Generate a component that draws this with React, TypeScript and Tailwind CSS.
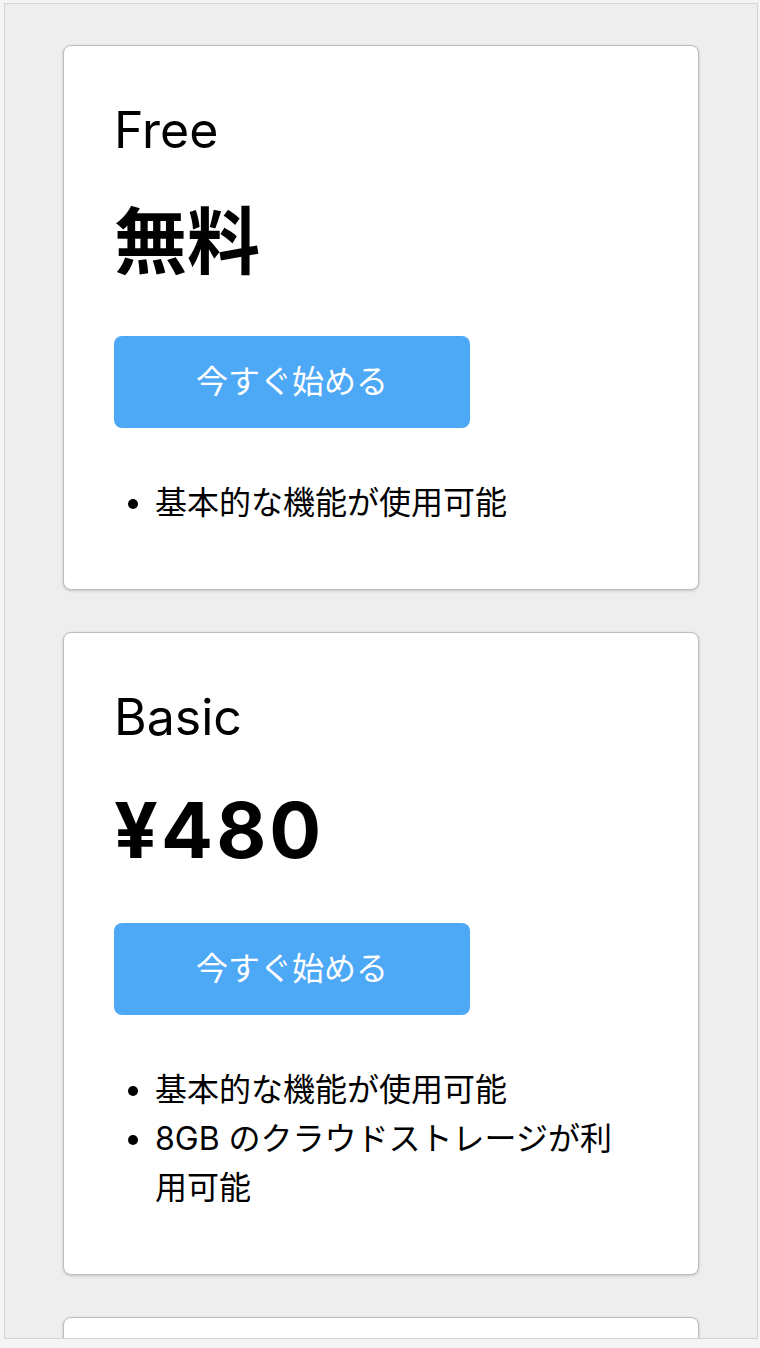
import React from "react";

const font = { fontFamily: '"Inter", "Noto Sans CJK JP", sans-serif' };

type Plan = { name: string; price: string; priceClass: string; features: string[] };

const plans: Plan[] = [
  { name: "Free", price: "無料", priceClass: "text-[73px]", features: ["基本的な機能が使用可能"] },
  {
    name: "Basic",
    price: "¥480",
    priceClass: "text-[77px] tracking-[0.04em]",
    features: ["基本的な機能が使用可能", "8GB のクラウドストレージが利用可能"],
  },
];

function Card({ plan }: { plan: Plan }) {
  return (
    <div className="bg-white border border-[#bdbdbd] rounded-[8px] shadow-[0_1px_3px_rgba(0,0,0,0.18)] pl-[50px] pr-[60px] pt-[60px] pb-[62px] text-black">
      <h2 className="text-[50px] leading-none font-normal -mt-[1px]">{plan.name}</h2>
      <div className={`mt-[50px] h-[74px] leading-none font-bold ${plan.priceClass}`}>{plan.price}</div>
      <button className="mt-[57px] w-[356px] h-[92px] rounded-[8px] bg-[#4da8f6] text-white text-[32px] flex items-center justify-center">
        今すぐ始める
      </button>
      <ul className="mt-[50px] list-disc pl-[41px] text-[32px] leading-[49px]">
        {plan.features.map((f) => (
          <li key={f}>{f}</li>
        ))}
      </ul>
    </div>
  );
}

export default function App() {
  return (
    <div style={font} className="w-[760px] h-[1348px] overflow-hidden bg-[#f4f4f4] pt-[3px] pl-[4px] pr-[2px]">
      <div className="h-[1336px] border border-[#d4d4d4] bg-[#eeeeee] overflow-hidden">
        <div className="pt-[41px] px-[58px] flex flex-col gap-[42px]">
          {plans.map((p) => (
            <Card key={p.name} plan={p} />
          ))}
          <div className="h-[546px] bg-white border border-[#bdbdbd] rounded-[8px] shadow-[0_1px_3px_rgba(0,0,0,0.18)]" />
        </div>
      </div>
    </div>
  );
}
